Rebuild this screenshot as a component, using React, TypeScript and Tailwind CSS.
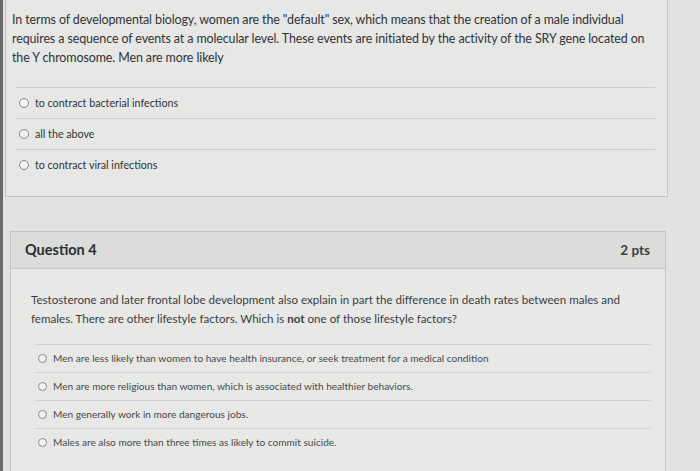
import React from "react";

type Answer = { text: string };

function Radio({ size = 10 }: { size?: number }) {
    return (
        <span
            className="inline-block shrink-0 rounded-full border border-[#8a8a8a] bg-[#f2f2f2]"
            style={{ width: size, height: size }}
        />
    );
}

const firstAnswers: Answer[] = [
    { text: "to contract bacterial infections" },
    { text: "all the above" },
    { text: "to contract viral infections" },
];

const secondAnswers: Answer[] = [
    { text: "Men are less likely than women to have health insurance, or seek treatment for a medical condition" },
    { text: "Men are more religious than women, which is associated with healthier behaviors." },
    { text: "Men generally work in more dangerous jobs." },
    { text: "Males are also more than three times as likely to commit suicide." },
];

export default function App() {
    return (
        <div className="w-[700px] h-[471px] overflow-hidden flex bg-[#e2e2e1] text-[#2f3337]" style={{ fontFamily: "Lato, 'Open Sans', sans-serif" }}>
            <div className="w-[3px] h-full bg-[#6b6b6b] shrink-0" />
            <div className="flex flex-col pl-[2px]">
                {/* previous question, cut off at top */}
                <section className="w-[663px] h-[197px] border border-t-0 border-[#c4c4c3] bg-[#e7e7e6] flex flex-col">
                    <p className="pt-[10px] pl-[6px] text-[12.45px] leading-[19px] tracking-[-0.1px]">
                        <span className="block whitespace-nowrap">In terms of developmental biology, women are the "default" sex, which means that the creation of a male individual</span>
                        <span className="block whitespace-nowrap">requires a sequence of events at a molecular level. These events are initiated by the activity of the SRY gene located on</span>
                        <span className="block whitespace-nowrap">the Y chromosome. Men are more likely</span>
                    </p>
                    <ul className="mt-[20px] ml-[10px] mr-[12px]">
                        {firstAnswers.map((a, i) => (
                            <li key={i} className="h-[31px] border-t border-[#cfcfce] flex items-center gap-[6px] pl-[3px] text-[10.7px]">
                                <Radio />
                                <span>{a.text}</span>
                            </li>
                        ))}
                    </ul>
                </section>

                {/* Question 4 */}
                <section className="mt-[34px] ml-[5px] w-[656px] h-[240px] border border-b-0 border-[#c4c4c3] bg-[#e8e8e7] flex flex-col">
                    <header className="h-[37px] shrink-0 bg-[#dcdcdb] border-b border-[#c9c9c8] flex items-center justify-between pl-[14px] pr-[15px]">
                        <h2 className="text-[14.5px] font-bold text-[#2b2f33]">Question 4</h2>
                        <span className="text-[13.5px] font-bold text-[#3b3f43]">2 pts</span>
                    </header>
                    <p className="pt-[21px] pl-[20px] text-[11.6px] leading-[19px] text-[#3a3e42]">
                        <span className="block whitespace-nowrap">Testosterone and later frontal lobe development also explain in part the difference in death rates between males and</span>
                        <span className="block whitespace-nowrap">females. There are other lifestyle factors. Which is <b className="font-bold">not</b> one of those lifestyle factors?</span>
                    </p>
                    <ul className="mt-[16px] ml-[24px] mr-[14px]">
                        {secondAnswers.map((a, i) => (
                            <li key={i} className="h-[28px] border-t border-[#d2d2d1] flex items-center gap-[6px] pl-[3px] text-[10.1px] text-[#45494d]">
                                <Radio size={9} />
                                <span className="whitespace-nowrap">{a.text}</span>
                            </li>
                        ))}
                    </ul>
                </section>
            </div>
        </div>
    );
}
